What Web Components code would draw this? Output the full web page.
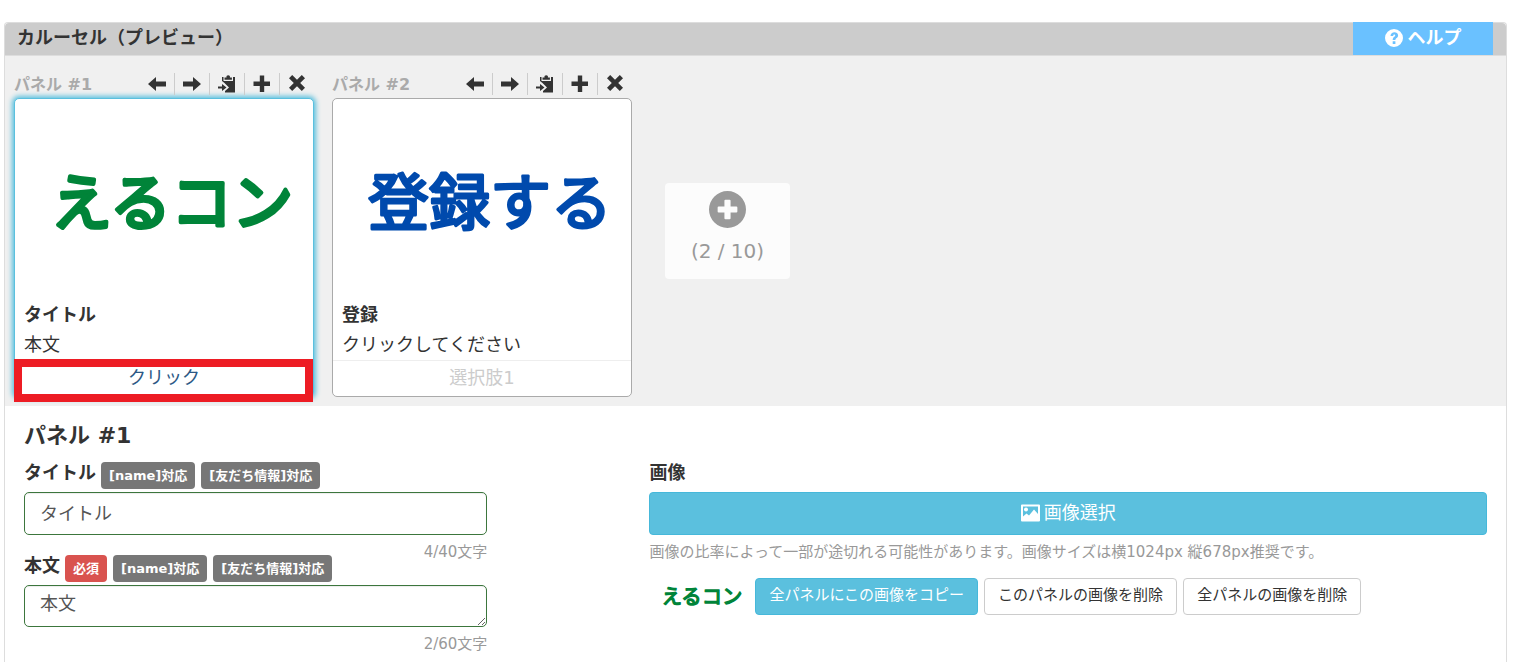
<!DOCTYPE html>
<html lang="ja">
<head>
<meta charset="utf-8">
<title>カルーセル（プレビュー）</title>
<style>
    body {
        margin: 0;
        padding: 22px 9px 0 4px;
        background: #fff;
        color: #333;
        font-family: "DejaVu Sans", "Noto Sans CJK JP", sans-serif;
        font-size: 18px;
        line-height: 30px;
    }
</style>
</head>
<body>
<carousel-editor heading="カルーセル（プレビュー）">
    <help-link slot="help">ヘルプ</help-link>

    <preview-card slot="preview" label="パネル #1" title-text="タイトル" body="本文" action="クリック" active marked>
        <logo-text text="えるコン" tone="green"></logo-text>
    </preview-card>
    <preview-card slot="preview" label="パネル #2" title-text="登録" body="クリックしてください" action="選択肢1">
        <logo-text text="登録する" tone="blue"></logo-text>
    </preview-card>
    <add-panel slot="preview" count="2" max="10"></add-panel>

    <panel-form heading="パネル #1">
        <text-field slot="fields" label="タイトル" value="タイトル" counter="4/40文字">
            <tag-badge>[name]対応</tag-badge>
            <tag-badge>[友だち情報]対応</tag-badge>
        </text-field>
        <text-field slot="fields" label="本文" value="本文" counter="2/60文字" multiline>
            <tag-badge tone="danger">必須</tag-badge>
            <tag-badge>[name]対応</tag-badge>
            <tag-badge>[友だち情報]対応</tag-badge>
        </text-field>
        <image-field slot="image"></image-field>
    </panel-form>
</carousel-editor>

<script>
/** Shared icon shapes, all on an 18 x 18 grid */
const ICONS = {
    left: '<path d="M0 9 8 2v4.600h10v4.800H8V16z"/>',
    right: '<path d="M18 9 10 2v4.600H0v4.800h10V16z"/>',
    paste: '<path d="M4 2h1.500v4h9.500V2H17v15.500H7V16l4-3.500L6.500 8 4 6z"/><path d="M6.500 4.800V2.500h2V1q1.700-1.700 3.400 0v1.500h2v2.300z"/><path d="M0 11.500h4V9l4.500 3.500L4 16v-2.500H0z"/>',
    plus: '<path d="M6.800.500h4.400v6.100H17v4.400h-5.800v6H6.800v-6H.500V6.600h6.300z"/>',
    close: '<path d="M4.200 0 9 4.800 13.800 0 17 3.200 12.200 8l4.800 4.800-3.200 3.200L9 11.200 4.200 16 1 12.800 5.800 8 1 3.200z"/>',
    help: '<path fill-rule="evenodd" d="M9 0a9 9 0 1 1 0 18A9 9 0 0 1 9 0zM5.500 7h2.700c0-2 2-1.800 2-.400 0 1.400-2.500 1.400-2.500 4.400h2.700c0-2 2.700-2 2.700-4.500C13.100 2 5.500 2 5.500 7zM7.700 12.200v2.700h2.700v-2.700z"/>',
    add: '<path fill-rule="evenodd" d="M9 0a9 9 0 1 1 0 18A9 9 0 0 1 9 0zM8 4.200q-.500 0-.500.500v2.800H4.700q-.500 0-.500.500v2q0 .500.500.500h2.800v2.800q0 .500.500.500h2q.500 0 .500-.500v-2.800h2.800q.500 0 .500-.500V8q0-.500-.500-.500h-2.800V4.700q0-.500-.500-.500z"/>',
    picture: '<path fill-rule="evenodd" d="M1 .500h17q1 0 1 1v15q0 1-1 1H1q-1 0-1-1v-15q0-1 1-1zM2 2.500v10l3.500-3 2.500 2 5-6 4 4.500V2.500z"/><circle cx="5" cy="5.500" r="2"/>'
}

class UiIcon extends HTMLElement {
    connectedCallback() {
        const size = this.getAttribute('size') || '18'
        this.attachShadow({ mode: 'open' }).innerHTML = /*html*/`
            <style>
                :host { display: inline-block; flex: none; }
                svg { display: block; fill: currentColor; overflow: visible; }
            </style>
            <svg width="${size}" height="${size}" viewBox="0 0 18 18" aria-hidden="true">${ICONS[this.getAttribute('name')]}</svg>
        `
    }
}

/** Four character wordmark. The round stroke gives the letters their soft ends */
class LogoText extends HTMLElement {
    connectedCallback() {
        const width = this.getAttribute('width') || '258'
        this.attachShadow({ mode: 'open' }).innerHTML = /*html*/`
            <style>
                :host { display: block; color: #008439; }
                :host([tone="blue"]) { color: #004aad; }
                svg { display: block; height: auto; }
                text {
                    fill: currentColor;
                    stroke: currentColor;
                    stroke-width: 4px;
                    stroke-linejoin: round;
                    font: 400 61px "Noto Sans CJK JP", sans-serif;
                    text-anchor: middle;
                }
                :host([tone="blue"]) text { stroke-width: 3px; }
            </style>
            <svg width="${width}" viewBox="0 0 258 96"><text x="129" y="73">${this.getAttribute('text')}</text></svg>
        `
    }
}

class TagBadge extends HTMLElement {
    connectedCallback() {
        this.attachShadow({ mode: 'open' }).innerHTML = /*html*/`
            <style>
                :host {
                    display: block;
                    padding: 0 8px;
                    border-radius: 4px;
                    background: #777;
                    color: #fff;
                    font-size: 13px;
                    font-weight: 700;
                    line-height: 27px;
                    white-space: nowrap;
                }
                :host([tone="danger"]) { background: #d9534f; }
            </style>
            <slot></slot>
        `
    }
}

class HelpLink extends HTMLElement {
    connectedCallback() {
        this.attachShadow({ mode: 'open' }).innerHTML = /*html*/`
            <style>
                :host { display: block; }
                a {
                    display: flex;
                    align-items: center;
                    justify-content: center;
                    gap: 5px;
                    box-sizing: border-box;
                    width: 140px;
                    height: 33px;
                    padding-bottom: 2px;
                    background: #6ac1ff;
                    color: #fff;
                    font-weight: 700;
                    text-decoration: none;
                }
            </style>
            <a href="#help"><ui-icon name="help"></ui-icon><slot></slot></a>
        `
    }
}

/** Outer frame: title bar, preview strip and the form below it */
class CarouselEditor extends HTMLElement {
    connectedCallback() {
        this.attachShadow({ mode: 'open' }).innerHTML = /*html*/`
            <style>
                :host { display: block; }
                section {
                    border: 1px solid #ddd;
                    border-bottom: 0;
                    border-radius: 4px 4px 0 0;
                    min-height: 100vh;
                }
                header {
                    display: flex;
                    justify-content: space-between;
                    height: 32px;
                    padding: 0 13px 0 12px;
                    border-bottom: 1px solid #ddd;
                    border-radius: 4px 4px 0 0;
                    background: #ccc;
                }
                h1 { margin: 0; font-size: 18px; line-height: 30px; }
                slot[name="help"] { display: block; margin-top: -1px; }
                .preview {
                    display: flex;
                    align-items: flex-start;
                    gap: 18px;
                    padding: 17px 9px 9px;
                    background: #f0f0f0;
                }
            </style>
            <section>
                <header>
                    <h1>${this.getAttribute('heading')}</h1>
                    <slot name="help"></slot>
                </header>
                <div class="preview"><slot name="preview"></slot></div>
                <slot></slot>
            </section>
        `
    }
}

class PreviewCard extends HTMLElement {
    connectedCallback() {
        const attr = (name) => this.getAttribute(name)
        const tools = [['left', '左へ移動'], ['right', '右へ移動'], ['paste', '複製'], ['plus', '追加'], ['close', '削除']]

        this.attachShadow({ mode: 'open' }).innerHTML = /*html*/`
            <style>
                :host { display: block; width: 300px; }
                .top { display: flex; justify-content: space-between; height: 25px; }
                .name {
                    color: #aaa;
                    font-size: 16px;
                    font-weight: 700;
                    line-height: 24px;
                }
                .tools { display: flex; height: 22px; }
                .tools button {
                    display: flex;
                    align-items: center;
                    justify-content: center;
                    width: 35px;
                    padding: 0;
                    border: 0;
                    border-left: 1px solid #ccc;
                    background: none;
                    color: #333;
                }
                .tools button:first-child { border-left-color: transparent; }
                .card {
                    box-sizing: border-box;
                    border: 1px solid #aaa;
                    border-radius: 5px;
                    background: #fff;
                }
                :host([active]) .card {
                    border-color: #5bc0de;
                    box-shadow: 0 0 5px 2px #5bc0de;
                }
                .image {
                    display: flex;
                    align-items: center;
                    justify-content: center;
                    height: 201px;
                    padding-left: 16px;
                }
                h2, p { margin: 0; padding: 0 9px; font-size: 18px; line-height: 30px; }
                h2 { font-weight: 700; }
                .action {
                    position: relative;
                    border-top: 1px solid #eee;
                    text-align: center;
                }
                .action button {
                    display: block;
                    width: 100%;
                    height: 35px;
                    padding: 0 0 2px;
                    border: 0;
                    background: none;
                    color: #ccc;
                    font: inherit;
                }
                :host([active]) .action button { color: #2c5885; }
                /* highlight frame over the action row */
                :host([marked]) .action::after {
                    content: "";
                    position: absolute;
                    inset: -2px 0 -6px -1px;
                    border: 8px solid #ed1c24;
                    pointer-events: none;
                }
            </style>
            <div class="top">
                <span class="name">${attr('label')}</span>
                <div class="tools">
                    ${tools.map(([icon, title]) => `<button type="button" aria-label="${title}"><ui-icon name="${icon}"></ui-icon></button>`).join('')}
                </div>
            </div>
            <div class="card">
                <div class="image"><slot></slot></div>
                <h2>${attr('title-text')}</h2>
                <p>${attr('body')}</p>
                <div class="action"><button type="button">${attr('action')}</button></div>
            </div>
        `
    }
}

class AddPanel extends HTMLElement {
    connectedCallback() {
        this.attachShadow({ mode: 'open' }).innerHTML = /*html*/`
            <style>
                :host { display: block; align-self: center; padding: 0 15px 8px; }
                button {
                    display: flex;
                    flex-direction: column;
                    align-items: center;
                    gap: 8px;
                    width: 125px;
                    height: 96px;
                    padding: 8px 0 0;
                    border: 0;
                    border-radius: 4px;
                    background: #fcfcfc;
                    color: #999;
                    font: inherit;
                    font-size: 20px;
                }
            </style>
            <button type="button">
                <ui-icon name="add" size="37"></ui-icon>
                <span>(${this.getAttribute('count')} / ${this.getAttribute('max')})</span>
            </button>
        `
    }
}

class PanelForm extends HTMLElement {
    connectedCallback() {
        this.attachShadow({ mode: 'open' }).innerHTML = /*html*/`
            <style>
                :host { display: block; padding-top: 13px; }
                h2 { margin: 0 19px 4px; font-size: 22px; line-height: 34px; }
                .columns { display: grid; grid-template-columns: 4fr 1fr 7fr; }
                .fields, .image { min-width: 0; padding: 0 18px 0 19px; }
                .image { grid-column: 3; padding-right: 19px; }
            </style>
            <h2>${this.getAttribute('heading')}</h2>
            <div class="columns">
                <div class="fields"><slot name="fields"></slot></div>
                <div class="image"><slot name="image"></slot></div>
            </div>
        `
    }
}

class TextField extends HTMLElement {
    connectedCallback() {
        const value = this.getAttribute('value')
        const control = this.hasAttribute('multiline')
            ? `<textarea id="control" rows="1">${value}</textarea>`
            : `<input id="control" type="text" value="${value}">`

        this.attachShadow({ mode: 'open' }).innerHTML = /*html*/`
            <style>
                :host { display: block; }
                .head { display: flex; align-items: flex-start; gap: 5px; height: 35px; }
                label { font-weight: 700; line-height: 32px; white-space: nowrap; }
                slot { display: flex; gap: 6px; padding-top: 5px; }
                input, textarea {
                    display: block;
                    box-sizing: border-box;
                    width: 100%;
                    height: 43px;
                    margin: 0;
                    padding: 4px 15px 8px;
                    border: 1px solid #3c763d;
                    border-radius: 5px;
                    background: #fff;
                    box-shadow: inset 0 1px 1px rgba(0, 0, 0, .075);
                    color: #555;
                    font: inherit;
                    line-height: 28px;
                }
                textarea { height: 42px; resize: vertical; }
                /* the next field's label row starts level with the counter */
                .counter {
                    height: 24px;
                    margin: 5px 0 -14px;
                    color: #999;
                    font-size: 15px;
                    line-height: 24px;
                    text-align: right;
                }
            </style>
            <div class="head">
                <label for="control">${this.getAttribute('label')}</label>
                <slot></slot>
            </div>
            ${control}
            <div class="counter">${this.getAttribute('counter')}</div>
        `
    }
}

class ImageField extends HTMLElement {
    connectedCallback() {
        this.attachShadow({ mode: 'open' }).innerHTML = /*html*/`
            <style>
                :host { display: block; }
                .label { height: 35px; font-weight: 700; line-height: 32px; }
                button {
                    border: 1px solid #ccc;
                    border-radius: 4px;
                    background: #fff;
                    color: #333;
                    font: inherit;
                    white-space: nowrap;
                }
                .info { border-color: #46b8da; background: #5bc0de; color: #fff; }
                .select {
                    display: flex;
                    align-items: center;
                    justify-content: center;
                    gap: 5px;
                    width: 100%;
                    height: 43px;
                    padding: 0 0 2px;
                }
                .note {
                    margin: 5px 0 0;
                    color: #999;
                    font-size: 15px;
                    line-height: 24px;
                }
                .row { display: flex; align-items: center; gap: 6px; height: 64px; }
                .row button { height: 37px; padding: 0 13px 2px; font-size: 15px; line-height: 24px; }
                .thumb {
                    display: flex;
                    justify-content: flex-end;
                    box-sizing: border-box;
                    width: 100px;
                    padding-right: 4px;
                }
            </style>
            <div class="label">画像</div>
            <button type="button" class="info select"><ui-icon name="picture"></ui-icon>画像選択</button>
            <p class="note">画像の比率によって一部が途切れる可能性があります。画像サイズは横1024px 縦678px推奨です。</p>
            <div class="row">
                <div class="thumb"><logo-text text="えるコン" width="86"></logo-text></div>
                <button type="button" class="info">全パネルにこの画像をコピー</button>
                <button type="button">このパネルの画像を削除</button>
                <button type="button">全パネルの画像を削除</button>
            </div>
        `
    }
}

customElements.define('ui-icon', UiIcon)
customElements.define('logo-text', LogoText)
customElements.define('tag-badge', TagBadge)
customElements.define('help-link', HelpLink)
customElements.define('preview-card', PreviewCard)
customElements.define('add-panel', AddPanel)
customElements.define('text-field', TextField)
customElements.define('image-field', ImageField)
customElements.define('panel-form', PanelForm)
customElements.define('carousel-editor', CarouselEditor)
</script>
</body>
</html>
